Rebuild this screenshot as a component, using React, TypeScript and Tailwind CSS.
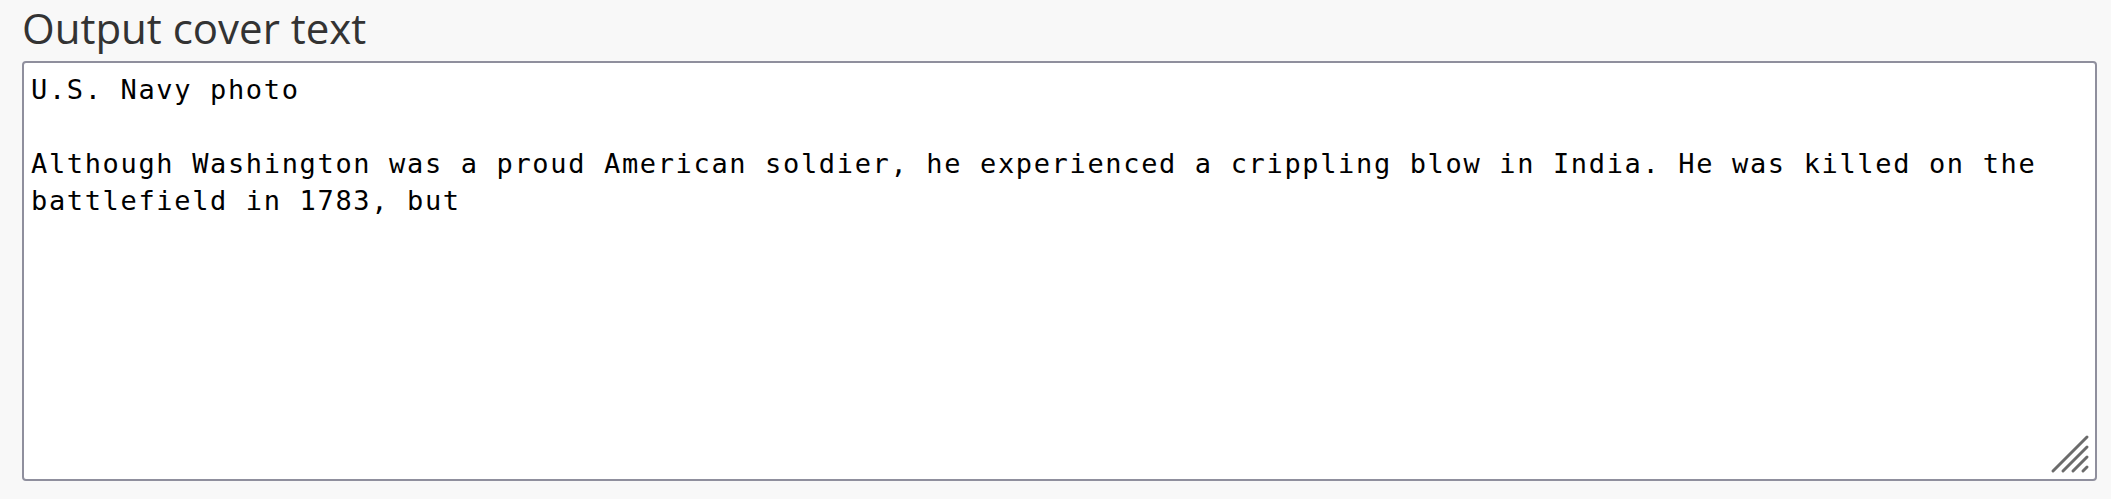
import React from "react";

const TEXT =
  "U.S. Navy photo\n\nAlthough Washington was a proud American soldier, he experienced a crippling blow in India. He was killed on the battlefield in 1783, but";

export default function App() {
  return (
    <div className="w-[2111px] h-[499px] bg-[#f8f8f8] pl-[22px] pr-[14px] overflow-hidden">
      <h2 className="m-0 text-[42px] leading-[56px] font-normal text-[#333333] mb-[5px] [font-family:'Open_Sans','Noto_Sans',sans-serif]">
        Output cover text
      </h2>
      <div className="relative">
        <textarea
          defaultValue={TEXT}
          spellCheck={false}
          className="block w-full h-[420px] resize-none overflow-hidden bg-white border-2 border-[#8f8f9d] rounded-[4px] pt-[8px] pl-[7px] pr-[7px] text-black text-[27px] leading-[37px] tracking-[1.65px] [font-family:'DejaVu_Sans_Mono','Liberation_Mono',monospace] outline-none"
        />
        <svg
          className="absolute right-[7px] bottom-[7px] pointer-events-none"
          width="40"
          height="40"
          viewBox="0 0 40 40"
        >
          <g stroke="#6b6b6b" strokeWidth="3" strokeLinecap="round">
            <line x1="37" y1="3" x2="3" y2="37" />
            <line x1="37" y1="13" x2="13" y2="37" />
            <line x1="37" y1="23" x2="23" y2="37" />
            <line x1="37" y1="33" x2="33" y2="37" />
          </g>
        </svg>
      </div>
    </div>
  );
}
